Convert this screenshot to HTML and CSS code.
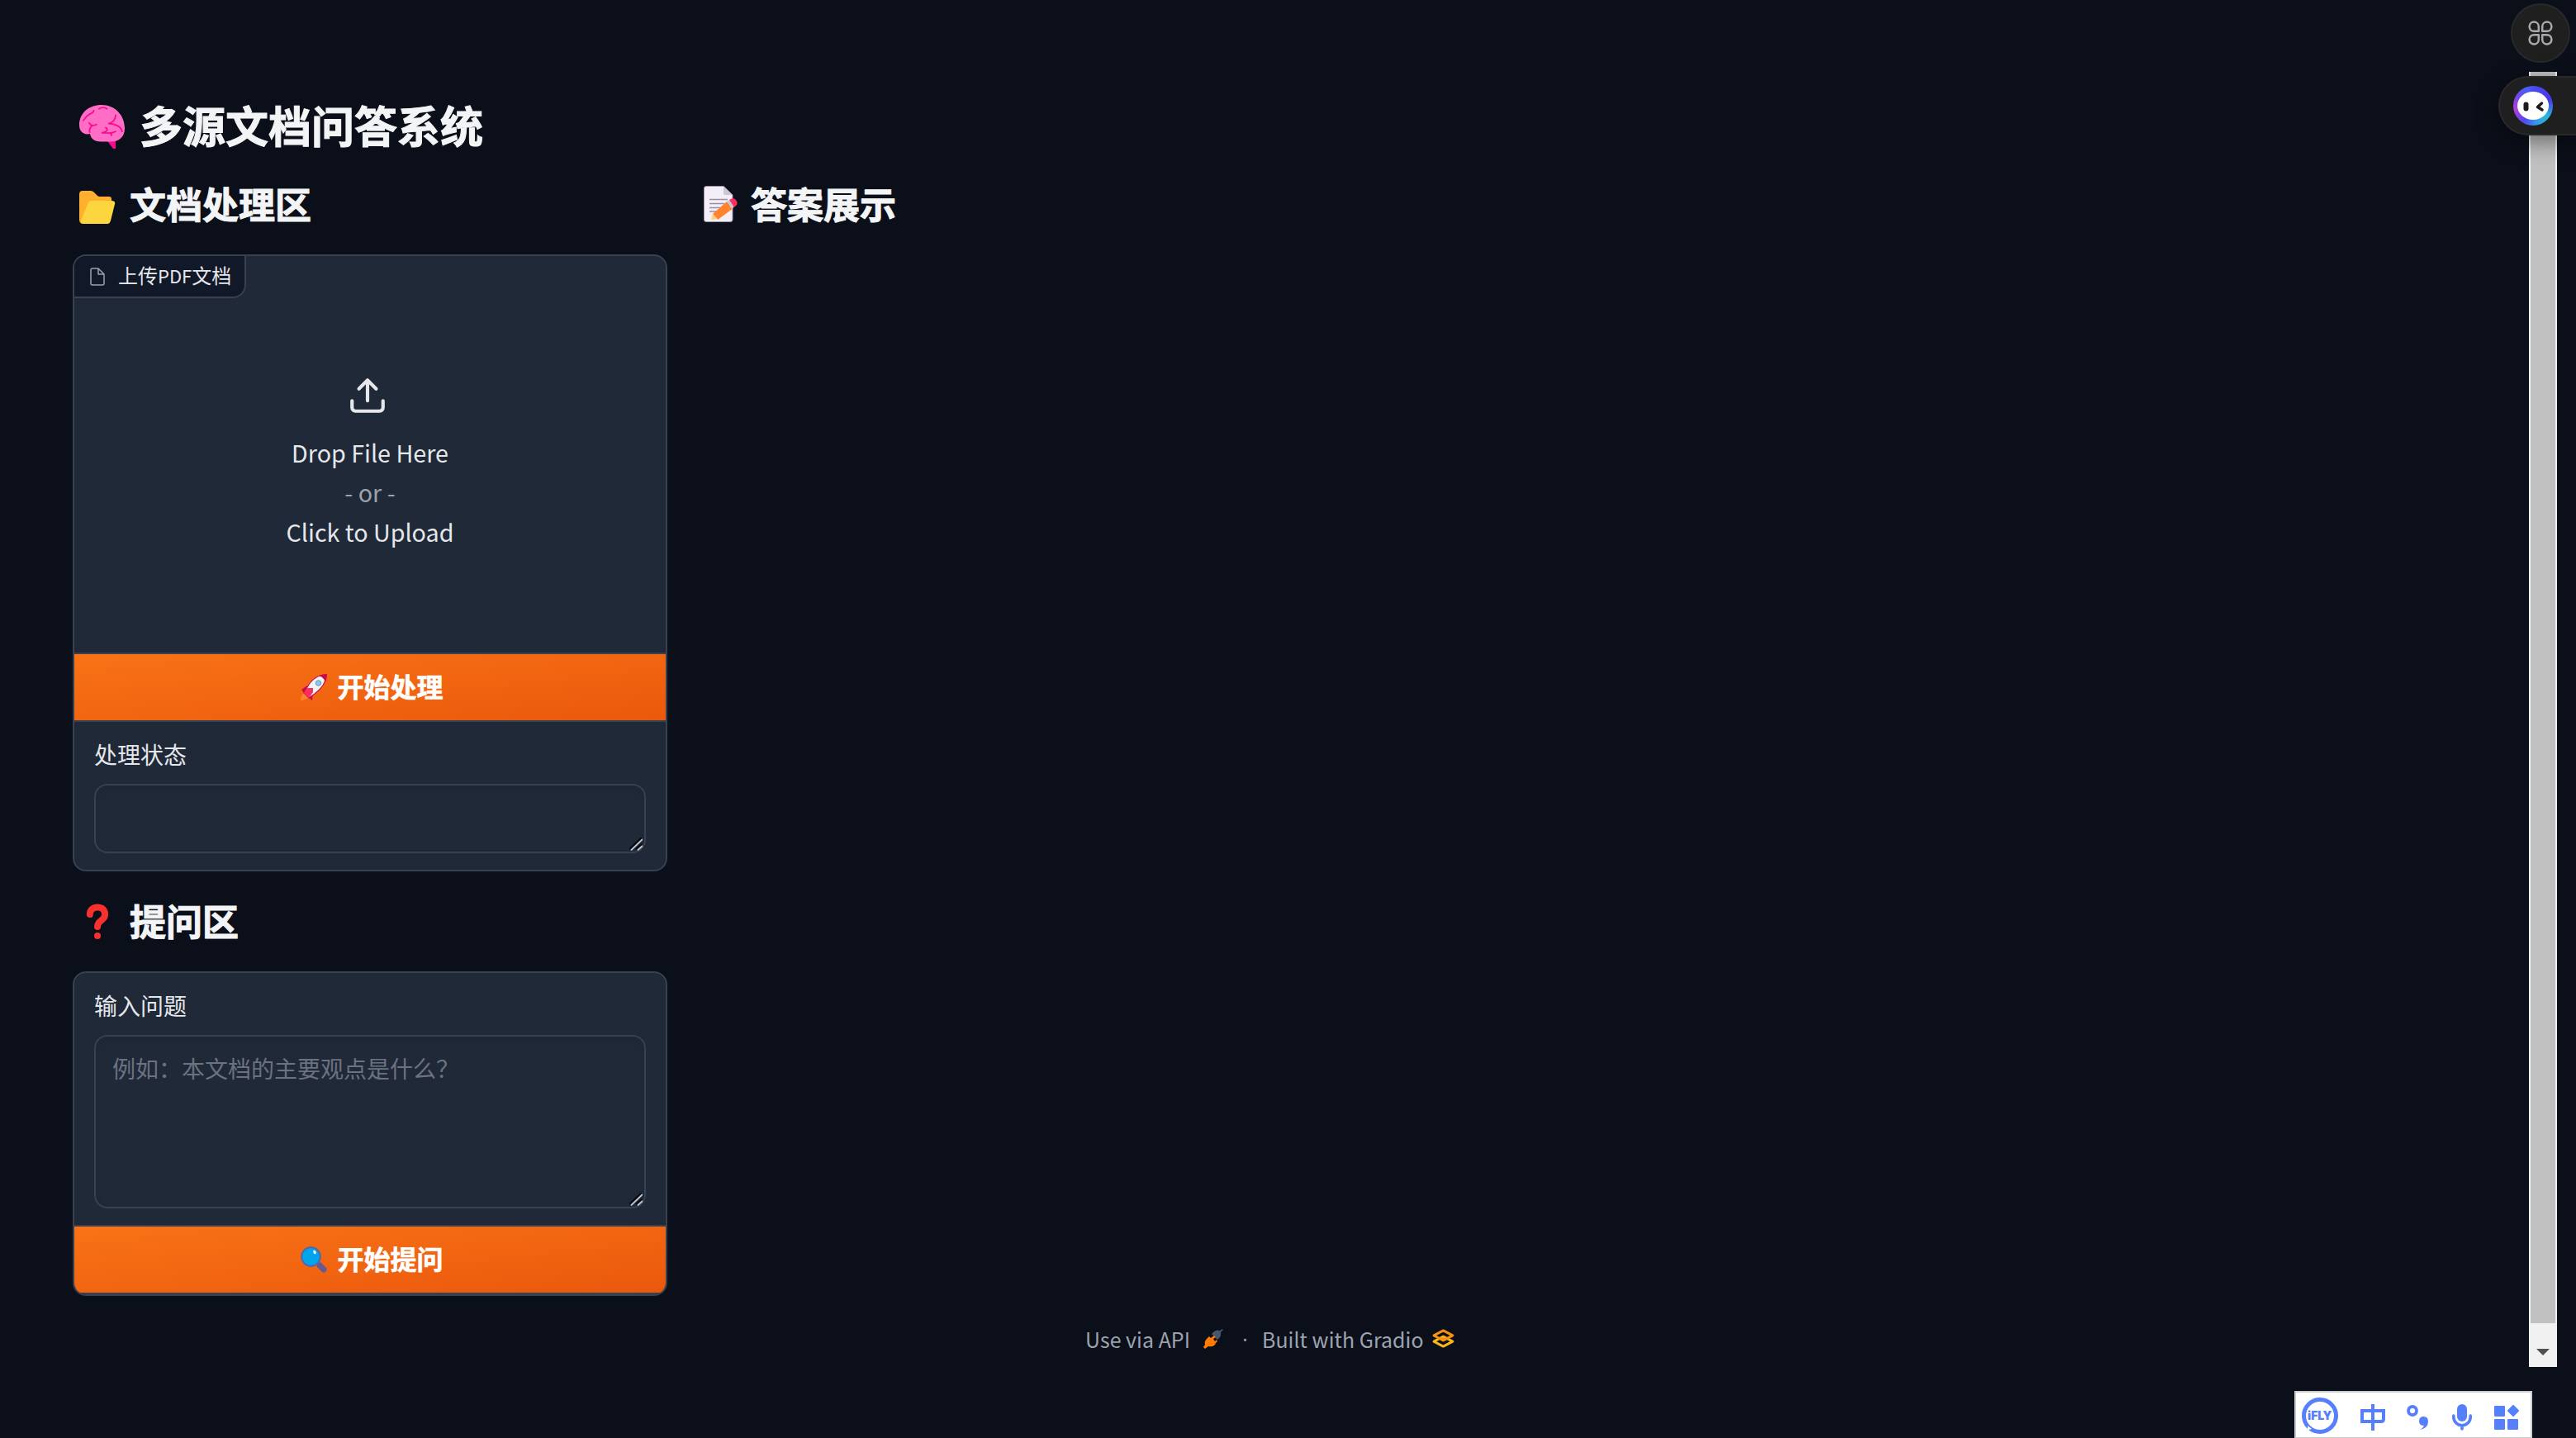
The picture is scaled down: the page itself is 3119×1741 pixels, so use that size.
FILE: index.html
```html
<!DOCTYPE html>
<html lang="zh-CN">
<head>
<meta charset="utf-8">
<title>多源文档问答系统</title>
<link rel="stylesheet" href="styles.css">
</head>
<body>
<main class="app">
  <h1 class="title">
    <svg class="emoji brain" viewBox="0 0 56 56" preserveAspectRatio="none"><path fill="#f70a8d" d="M33 45L44 46V56H41Z"/><path fill="#ff6dc6" d="M27 0C43 0 55 13 55 30C55 42 47 47 38 47H26C18 47 14 43 13 37C5 39 0 34 0 26C0 10 12 0 27 0Z"/><path fill="none" stroke="#f70a8d" stroke-width="1.8" stroke-linecap="round" d="M5 20C8 15 11 12 16 10C17 9 17.500 8 17.500 7M24 5C27 3 31 3 33.500 5M44 13C44 18 41 23 35 24C41 24 50 26 52 34M12 23C14 27 18 27 21 25M15 27C12 30 12 32 12.500 35M32 29C35 31 34 34 30 35C25 36 28 36 37 36C38 36 39 37 39 39M36 36C39 36 42 35 44 34"/></svg>
    <span>多源文档问答系统</span>
  </h1>
  <div class="columns">
    <section class="left">
      <h2 class="heading">
        <svg class="emoji folder" viewBox="0 0 44 44"><path fill="#ffb02e" d="M0 6Q0 2 4 2H14Q16 2 18 4L22 8Q23 9 25 9H36Q39 9 39 12V20L10 42H5Q0 42 0 37Z"/><path fill="#fcd53f" d="M11 16Q12 14 15 14H39Q44 14 43 18L38 38Q37 42 34 42H6Q1 42 2 38Z"/></svg>
        <span>文档处理区</span>
      </h2>
      <div class="card">
        <div class="upload">
          <div class="tag">
            <svg class="file-icon" viewBox="0 0 24 24"><path d="M13 2H6a2 2 0 0 0-2 2v16a2 2 0 0 0 2 2h12a2 2 0 0 0 2-2V9zM13 2v7h7"/></svg>
            <span>上传<span class="latin">PDF</span>文档</span>
          </div>
          <div class="drop">
            <svg class="upload-icon" viewBox="0 0 24 24"><path d="M21 15v4a2 2 0 0 1-2 2H5a2 2 0 0 1-2-2v-4M17 8l-5-5-5 5M12 3v12"/></svg>
            <span>Drop File Here</span>
            <span class="or">- or -</span>
            <span>Click to Upload</span>
          </div>
        </div>
        <button class="primary">
          <svg class="btn-emoji" viewBox="0 0 32 32"><path fill="#ff822d" d="M3 24Q6 21 9 24T8 30Q4 32 0 32Q0 27 3 24Z"/><path fill="#ca0b4a" d="M1 19L8 14L15 22L14 32L9 28L4 23Z"/><path fill="#f4f4f4" stroke="#ca0b4a" stroke-width="1.200" d="M8 16C13 7 20 1 31 1C31 11 25 18 17 24L10 29L4 23Z"/><path fill="#ca0b4a" d="M22 2Q27 0 32 0Q32 5 30 10Q28 4 22 2Z"/><path fill="#f92f60" d="M4 23L8 17H15V22L10 29Z"/><circle cx="21.500" cy="11" r="3.200" fill="#83cbff" stroke="#7290a5" stroke-width="1"/></svg>
          <span>开始处理</span>
        </button>
        <div class="field">
          <label>处理状态</label>
          <div class="area">
            <textarea class="box status"></textarea>
            <svg class="grip" viewBox="0 0 16 16"><path d="M0 14L15 0M8 14L15 8" stroke="#05070c"/><path d="M2 15.500L16 2M10 15.500L16 10" stroke="#c4c7cc"/></svg>
          </div>
        </div>
      </div>
      <h2 class="heading ask">
        <svg class="emoji" viewBox="0 0 44 44"><path fill="none" stroke="#f8312f" stroke-width="8" stroke-linecap="round" d="M12.800 13C13 7 17 4.500 22 4.500C28 4.500 31.500 8 31 14C30.500 21 22 20 22 28"/><circle cx="22" cy="39" r="4" fill="#f8312f"/></svg>
        <span>提问区</span>
      </h2>
      <div class="card last">
        <div class="field">
          <label>输入问题</label>
          <div class="area">
            <textarea class="box question" placeholder="例如：本文档的主要观点是什么？"></textarea>
            <svg class="grip" viewBox="0 0 16 16"><path d="M0 14L15 0M8 14L15 8" stroke="#05070c"/><path d="M2 15.500L16 2M10 15.500L16 10" stroke="#c4c7cc"/></svg>
          </div>
        </div>
        <button class="primary">
          <svg class="btn-emoji" viewBox="0 0 32 32"><path stroke="#635994" stroke-width="7" stroke-linecap="round" d="M23 23L28 28"/><circle cx="12.500" cy="12.500" r="11.300" fill="#00a6ed" stroke="#4f6bae" stroke-width="2.200"/><ellipse cx="17" cy="7" rx="1.600" ry="2.400" fill="#fff" transform="rotate(-25 17 7)"/></svg>
          <span>开始提问</span>
        </button>
      </div>
    </section>
    <section class="right">
      <h2 class="heading">
        <svg class="emoji memo" viewBox="0 0 44 44"><path fill="#f3eef8" stroke="#998ea4" stroke-width="1" d="M3 .5H24L35 11V41Q35 43.500 32 43.500H3Q.5 43.500 .5 41V3Q.5 .5 3 .5Z"/><path fill="#cdc4d6" d="M24 .5L35 11H26Q24 11 24 9Z"/><path stroke="#998ea4" stroke-width="1.600" d="M7 16.500H29M7 21.500H25M7 26.500H20M7 31H16"/><path fill="#ff822d" d="M28 19L36 27L17 41L11 34Z"/><path fill="#ffce7c" d="M11 34L17 40L9 41Z"/><path fill="#cdc4d6" d="M28 19L31 17L37 25L34 28Z"/><path fill="#f92f60" d="M31 17Q35 14 38 16Q42 20 40 23L37 26Z"/></svg>
        <span>答案展示</span>
      </h2>
    </section>
  </div>
  <footer class="footer">
    <span>Use via API</span>
    <svg class="plug" viewBox="0 0 24 24"><path fill="#475569" d="M11 5Q15 0 20 2L23 0L24 1L21 4Q22 10 17 13L10 6Z"/><path fill="#ff7c00" d="M4 12L7 9L9 11L13 8L15 10L12 12L14 15L16 13L17 15L15 17Q14 22 6 21L2 24L0 22L2 19Q1 15 4 12Z"/></svg>
    <span class="dot">·</span>
    <span>Built with Gradio</span>
    <svg class="gradio" viewBox="0 0 26 22"><g fill="none" stroke-width="2.800" stroke-linejoin="round"><path stroke="#f7b718" d="M2 14.500L13 8.700L24 14.500L13 20.300Z"/><path stroke="#f59212" d="M2 7.500L13 1.700L24 7.500L13 13.300Z"/></g><circle cx="13" cy="11" r="1.500" fill="#f59212"/></svg>
  </footer>
</main>

<div class="scrollbar"><div class="thumb"></div><svg viewBox="0 0 16 8" class="arrow"><path fill="#505050" d="M0 0H16L8 8Z"/></svg></div>

<div class="round-btn">
  <svg viewBox="0 0 30 30"><path fill="none" stroke="#aaaaae" stroke-width="2.500" stroke-linejoin="round" d="M12.800 12.800H7A5.600 5.600 0 1 1 12.800 7ZM17.200 12.800V7A5.600 5.600 0 1 1 23 12.800ZM12.800 17.200V23A5.600 5.600 0 1 1 7 17.200ZM17.200 17.200H23A5.600 5.600 0 1 1 17.200 23Z"/></svg>
</div>
<div class="assistant">
  <div class="face"><svg viewBox="0 0 48 48"><ellipse cx="24" cy="24" rx="19" ry="17" fill="#fff"/><rect x="12.500" y="19.500" width="6" height="11" rx="3" fill="#1c1c1e"/><path d="M34.500 21L29.500 25.500L35 29" fill="none" stroke="#1c1c1e" stroke-width="3.500" stroke-linecap="round" stroke-linejoin="round"/></svg></div>
</div>

<div class="ime">
  <svg class="ifly" viewBox="0 0 44 44"><circle cx="22" cy="22" r="19.500" fill="none" stroke="#557ffb" stroke-width="5"/><path d="M5 40Q8 37 7 34L12 38Q8 39 5 40Z" fill="#fff"/><text x="7" y="27">iFLY</text></svg>
  <svg class="zhong" viewBox="0 0 30 32"><path fill="none" stroke="#557ffb" stroke-width="4" d="M2 8H28V18Q28 21 25 21H2ZM15 0V32"/></svg>
  <svg class="punct" viewBox="0 0 26 30"><circle cx="7" cy="7" r="5" fill="none" stroke="#557ffb" stroke-width="3.800"/><path fill="#557ffb" d="M16 30Q20 28 21 25Q15 25 15 19.500Q15 14 20.500 14Q26 14 26 20Q26 28 16 30Z"/></svg>
  <svg class="mic" viewBox="0 0 24 32"><rect x="6" y="0" width="12" height="21" rx="6" fill="#557ffb"/><path fill="none" stroke="#557ffb" stroke-width="3.600" stroke-linecap="round" d="M1.800 14V15.500A10.200 10.200 0 0 0 22.200 15.500V14M12 26V30"/></svg>
  <svg class="grid" viewBox="0 0 30 30"><path fill="#557ffb" stroke="#557ffb" stroke-width="2" stroke-linejoin="round" d="M1 2H12V13H1ZM1 18H12V29H1ZM17 18H28V29H17ZM23 1L29 7L23 13L17 7Z"/></svg>
</div>
</body>
</html>
```
FILE: styles.css
```css
* { box-sizing: border-box; }

body {
  margin: 0;
  height: 1741px;
  overflow: hidden;
  background: #0b0f19;
  color: #e5e7eb;
  font-family: "Noto Sans CJK SC", sans-serif;
}

.app {
  width: 3062px;
  padding: 116px 88px 0;
}

h1, h2 {
  display: flex;
  align-items: center;
  margin: 0;
  padding-left: 8px;
  color: #f3f4f6;
  font-weight: 700;
  -webkit-text-stroke: 1px #f3f4f6;
}
h1 span { margin-top: -6px; }
h2 span { margin-top: -4px; }

.title { height: 76px; gap: 17px; font-size: 52px; line-height: 76px; }
.heading { height: 64px; gap: 17px; font-size: 44px; line-height: 64px; }
.emoji { width: 44px; height: 44px; }
.emoji.brain { width: 56px; height: 53px; margin-top: -2px; }
.emoji.folder { margin-top: 5px; }
.emoji.memo { margin: -2px -4px 0 0; }

.columns {
  display: flex;
  gap: 32px;
  margin-top: 24px;
}

.left { width: 720px; }
.right { flex: 1; padding-left: 4px; }

.card {
  margin-top: 28px;
  height: 747px;
  border: 2px solid #374151;
  border-radius: 16px;
  background: #1f2937;
  overflow: hidden;
}
.card.last { height: 393px; }

.upload { height: 480px; }

.tag {
  display: flex;
  align-items: center;
  gap: 13px;
  width: 208px;
  height: 51px;
  padding-left: 16px;
  border: solid #374151;
  border-width: 0 2px 2px 0;
  border-radius: 0 0 16px 0;
  background: #111827;
  font-size: 24px;
  line-height: 46px;
  white-space: nowrap;
}
.tag > span { margin-top: -3px; }
.latin { font-size: 22px; }

.file-icon { width: 24px; height: 24px; flex: none; }
.file-icon path, .upload-icon path { fill: none; stroke: #e5e7eb; stroke-linecap: round; stroke-linejoin: round; }
.file-icon path { stroke: #9ca3af; stroke-width: 1.5; }

.drop {
  display: flex;
  flex-direction: column;
  align-items: center;
  padding-top: 93px;
  font-size: 28.7px;
  line-height: 48px;
}
.upload-icon { width: 50px; height: 50px; margin: 0 6px 20px 0; }
.upload-icon path { stroke-width: 2; }
.or { color: #9ca3af; }

.primary {
  display: flex;
  align-items: center;
  justify-content: center;
  gap: 12px;
  width: 716px;
  height: 84px;
  padding: 0 0 0 5px;
  border: solid #374151;
  border-width: 2px 0;
  background: linear-gradient(to bottom right, #f97316, #ea580c) padding-box;
  color: #fff;
  font: 700 32px/48px "Noto Sans CJK SC", sans-serif;
  -webkit-text-stroke: .6px #fff;
}
.primary span { margin-top: -4px; }
.btn-emoji { width: 32px; height: 32px; }

.field { padding: 18px 24px 20px; }
.field label { display: block; height: 57px; font-size: 28px; line-height: 42px; }

.area { position: relative; }
.box {
  display: block;
  width: 668px;
  padding: 17px 20px;
  border: 2px solid #374151;
  border-radius: 16px;
  background: #1f2937;
  box-shadow: inset 0 4px 8px rgba(0, 0, 0, .05);
  font: 28px/42px "Noto Sans CJK SC", sans-serif;
  resize: none;
}
.box::placeholder { color: #6b7280; }
.status { height: 84px; }
.question { height: 210px; }
.grip { position: absolute; right: 4px; bottom: 3px; width: 16px; height: 16px; }
.grip path { stroke-width: 1.8; }

.ask { margin-top: 29px; }

.footer {
  display: flex;
  align-items: center;
  height: 48px;
  margin-top: 28px;
  padding-left: 1226px;
  color: #9ca3af;
  font-size: 25px;
}
.footer span { margin-top: -1px; }
.plug { width: 24px; height: 24px; margin-left: 16px; }
.dot { width: 47px; padding-left: 6px; text-align: center; font-family: "Open Sans", sans-serif; }
.gradio { width: 27px; height: 23px; margin-left: 10px; margin-top: -2px; }

.scrollbar {
  position: absolute;
  left: 3062px;
  top: 87px;
  width: 34px;
  height: 1568px;
  background: #f1f1f1;
}
.thumb { width: 30px; height: 1515px; margin: 0 2px; background: #c1c1c1; }
.arrow { display: block; width: 16px; height: 8px; margin: 31px 0 0 9px; }

.round-btn {
  position: absolute;
  left: 3040px;
  top: 4px;
  display: grid;
  place-items: center;
  width: 72px;
  height: 72px;
  border: 2px solid #29292b;
  border-radius: 50%;
  background: #1f1f1f;
}
.round-btn svg { width: 30px; height: 30px; }

.assistant {
  position: absolute;
  left: 3025px;
  top: 92px;
  width: 94px;
  height: 72px;
  padding: 10px 16px;
  border: 2px solid #29292b;
  border-right: 0;
  border-radius: 36px 0 0 36px;
  background: #1f1f1f;
  box-shadow: 0 8px 28px rgba(0, 0, 0, .45);
}
.face {
  width: 48px;
  height: 48px;
  border-radius: 50%;
  background: conic-gradient(#4a4cf0, #4938e8 70deg, #28b8d8 125deg, #3898e8 170deg, #5048f0 210deg, #b040d8 260deg, #7048e8 300deg, #4a60f8 340deg, #4a4cf0);
}
.face svg { display: block; }

.ime {
  position: absolute;
  left: 2778px;
  top: 1684px;
  display: flex;
  align-items: center;
  width: 288px;
  height: 57px;
  padding: 2px 0 0 7px;
  border: 2px solid #ccc;
  border-bottom-width: 1px;
  background: #fff;
}
.ifly { width: 44px; height: 44px; overflow: visible; }
.ifly text { fill: #557ffb; font: 900 14px Inter, "Liberation Sans", sans-serif; }
.zhong { width: 30px; height: 32px; margin: 4px 0 0 27px; }
.punct { width: 26px; height: 30px; margin: 4px 0 0 26px; }
.mic { width: 24px; height: 32px; margin: 4px 0 0 29px; }
.grid { width: 30px; height: 30px; margin: 4px 0 0 27px; }
```
